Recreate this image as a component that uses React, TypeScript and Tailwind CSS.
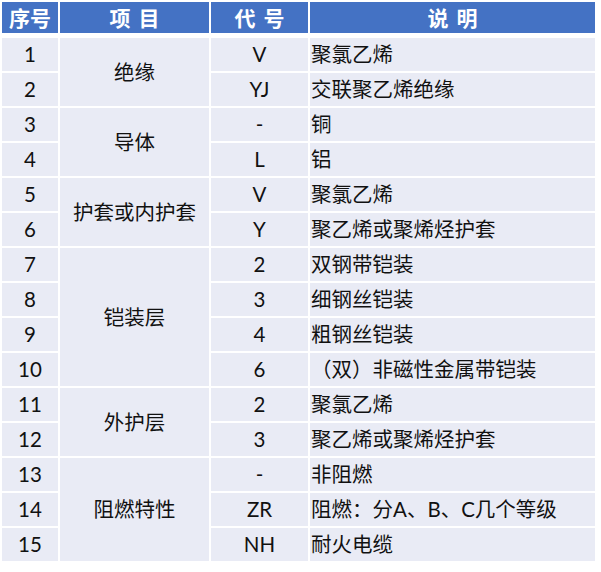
type Row = { no: number; code: string; desc: string };
type Group = { name: string; rows: Row[] };

const groups: Group[] = [
  {
    name: "绝缘",
    rows: [
      { no: 1, code: "V", desc: "聚氯乙烯" },
      { no: 2, code: "YJ", desc: "交联聚乙烯绝缘" },
    ],
  },
  {
    name: "导体",
    rows: [
      { no: 3, code: "-", desc: "铜" },
      { no: 4, code: "L", desc: "铝" },
    ],
  },
  {
    name: "护套或内护套",
    rows: [
      { no: 5, code: "V", desc: "聚氯乙烯" },
      { no: 6, code: "Y", desc: "聚乙烯或聚烯烃护套" },
    ],
  },
  {
    name: "铠装层",
    rows: [
      { no: 7, code: "2", desc: "双钢带铠装" },
      { no: 8, code: "3", desc: "细钢丝铠装" },
      { no: 9, code: "4", desc: "粗钢丝铠装" },
      { no: 10, code: "6", desc: "（双）非磁性金属带铠装" },
    ],
  },
  {
    name: "外护层",
    rows: [
      { no: 11, code: "2", desc: "聚氯乙烯" },
      { no: 12, code: "3", desc: "聚乙烯或聚烯烃护套" },
    ],
  },
  {
    name: "阻燃特性",
    rows: [
      { no: 13, code: "-", desc: "非阻燃" },
      { no: 14, code: "ZR", desc: "阻燃：分A、B、C几个等级" },
      { no: 15, code: "NH", desc: "耐火电缆" },
    ],
  },
];

const cell = "h-[33px] bg-[#e9ebf5] flex items-center";

function Header({ chars, w }: { chars: string[]; w: string }) {
  return (
    <div
      className={`${w} bg-[#4472c4] flex items-center justify-center gap-[8px] text-white text-[21px] font-bold`}
    >
      {chars.map((c) => (
        <span key={c}>{c}</span>
      ))}
    </div>
  );
}

function GroupRows({ g }: { g: Group }) {
  return (
    <div className="flex gap-[2px]">
      <div className="w-[56px] flex flex-col gap-[2px]">
        {g.rows.map((r) => (
          <div key={r.no} className={`${cell} justify-center`}>
            {r.no}
          </div>
        ))}
      </div>
      <div className="w-[149px] bg-[#e9ebf5] flex items-center justify-center">
        {g.name}
      </div>
      <div className="w-[97px] flex flex-col gap-[2px]">
        {g.rows.map((r) => (
          <div key={r.no} className={`${cell} justify-center`}>
            {r.code}
          </div>
        ))}
      </div>
      <div className="w-[285px] flex flex-col gap-[2px]">
        {g.rows.map((r) => (
          <div key={r.no} className={`${cell} pl-[1px]`}>
            {r.desc}
          </div>
        ))}
      </div>
    </div>
  );
}

export default function App() {
  return (
    <div className="w-[601px] h-[572px] bg-white p-[2px] font-['Lato','Noto_Sans_CJK_SC',sans-serif] text-[20.5px] text-[#111]">
      <div className="flex gap-[2px] h-[31px]">
        <Header chars={["序号"]} w="w-[56px]" />
        <Header chars={["项", "目"]} w="w-[149px]" />
        <Header chars={["代", "号"]} w="w-[97px]" />
        <Header chars={["说", "明"]} w="w-[285px]" />
      </div>
      <div className="mt-[5px] flex flex-col gap-[2px]">
        {groups.map((g) => (
          <GroupRows key={g.name} g={g} />
        ))}
      </div>
    </div>
  );
}
